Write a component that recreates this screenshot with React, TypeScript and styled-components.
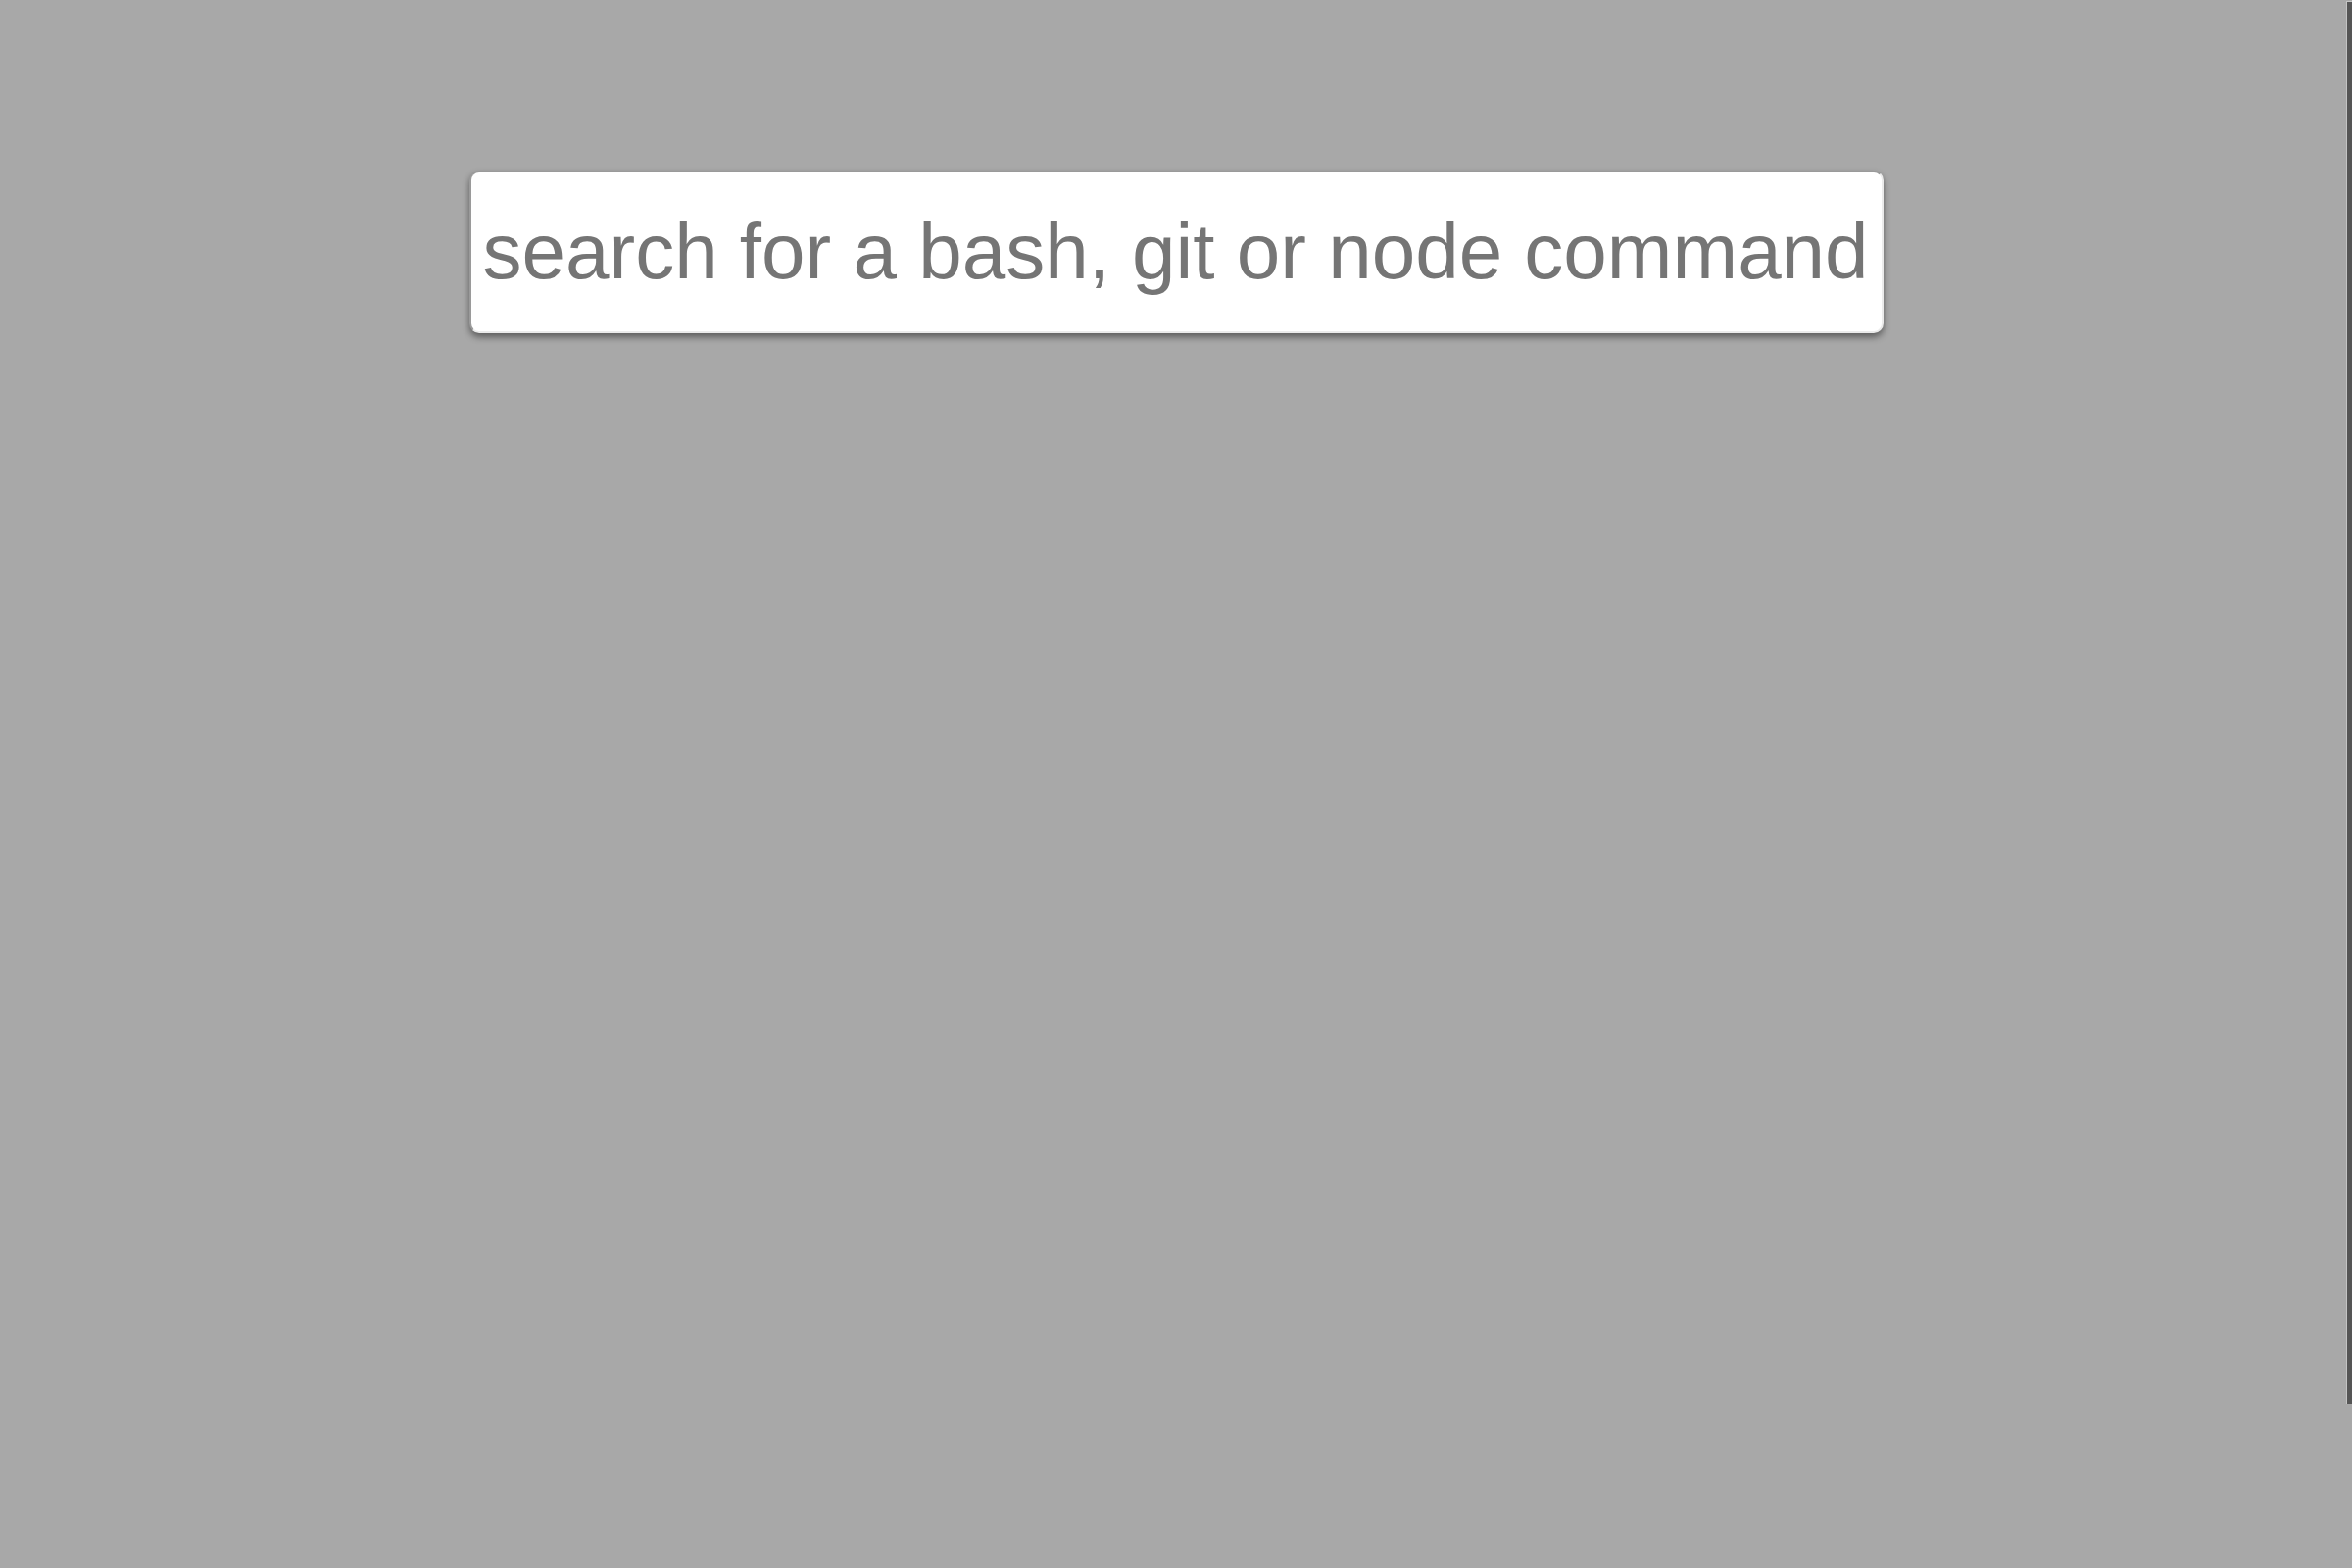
import React from "react";
import styled, { createGlobalStyle } from "styled-components";

const Global = createGlobalStyle`
  html, body { margin: 0; padding: 0; background: #a8a8a8; }
  body { font-family: "Liberation Sans", Arial, sans-serif; overflow: hidden; }
`;

const Page = styled.div`
  position: relative;
  width: 2400px;
  height: 1600px;
  background: #a8a8a8;
  display: flex;
  flex-direction: column;
  align-items: center;
  padding-top: 174px;
  box-sizing: border-box;
`;

const SearchInput = styled.input`
  box-sizing: border-box;
  width: 1443px;
  height: 166px;
  padding: 0 8px 0 12px;
  border-radius: 10px;
  border-style: solid;
  border-width: 2px;
  border-color: #9a9a9a #ebebeb #ebebeb #9a9a9a;
  background: #ffffff;
  box-shadow: 0 4px 7px rgba(0, 0, 0, 0.45);
  font-family: "Liberation Sans", Arial, sans-serif;
  font-size: 80px;
  color: #333;
  outline: none;
  &::placeholder { color: #757575; }
`;

const ScrollThumb = styled.div`
  position: absolute;
  top: 1px;
  right: 0;
  width: 5px;
  height: 1431px;
  background: #555555;
  border-left: 1px solid #c4c4c4;
  border-top: 1px solid #c4c4c4;
`;

export default function App() {
  return (
    <>
      <Global />
      <Page>
        <SearchInput placeholder="search for a bash, git or node command" />
        <ScrollThumb />
      </Page>
    </>
  );
}
